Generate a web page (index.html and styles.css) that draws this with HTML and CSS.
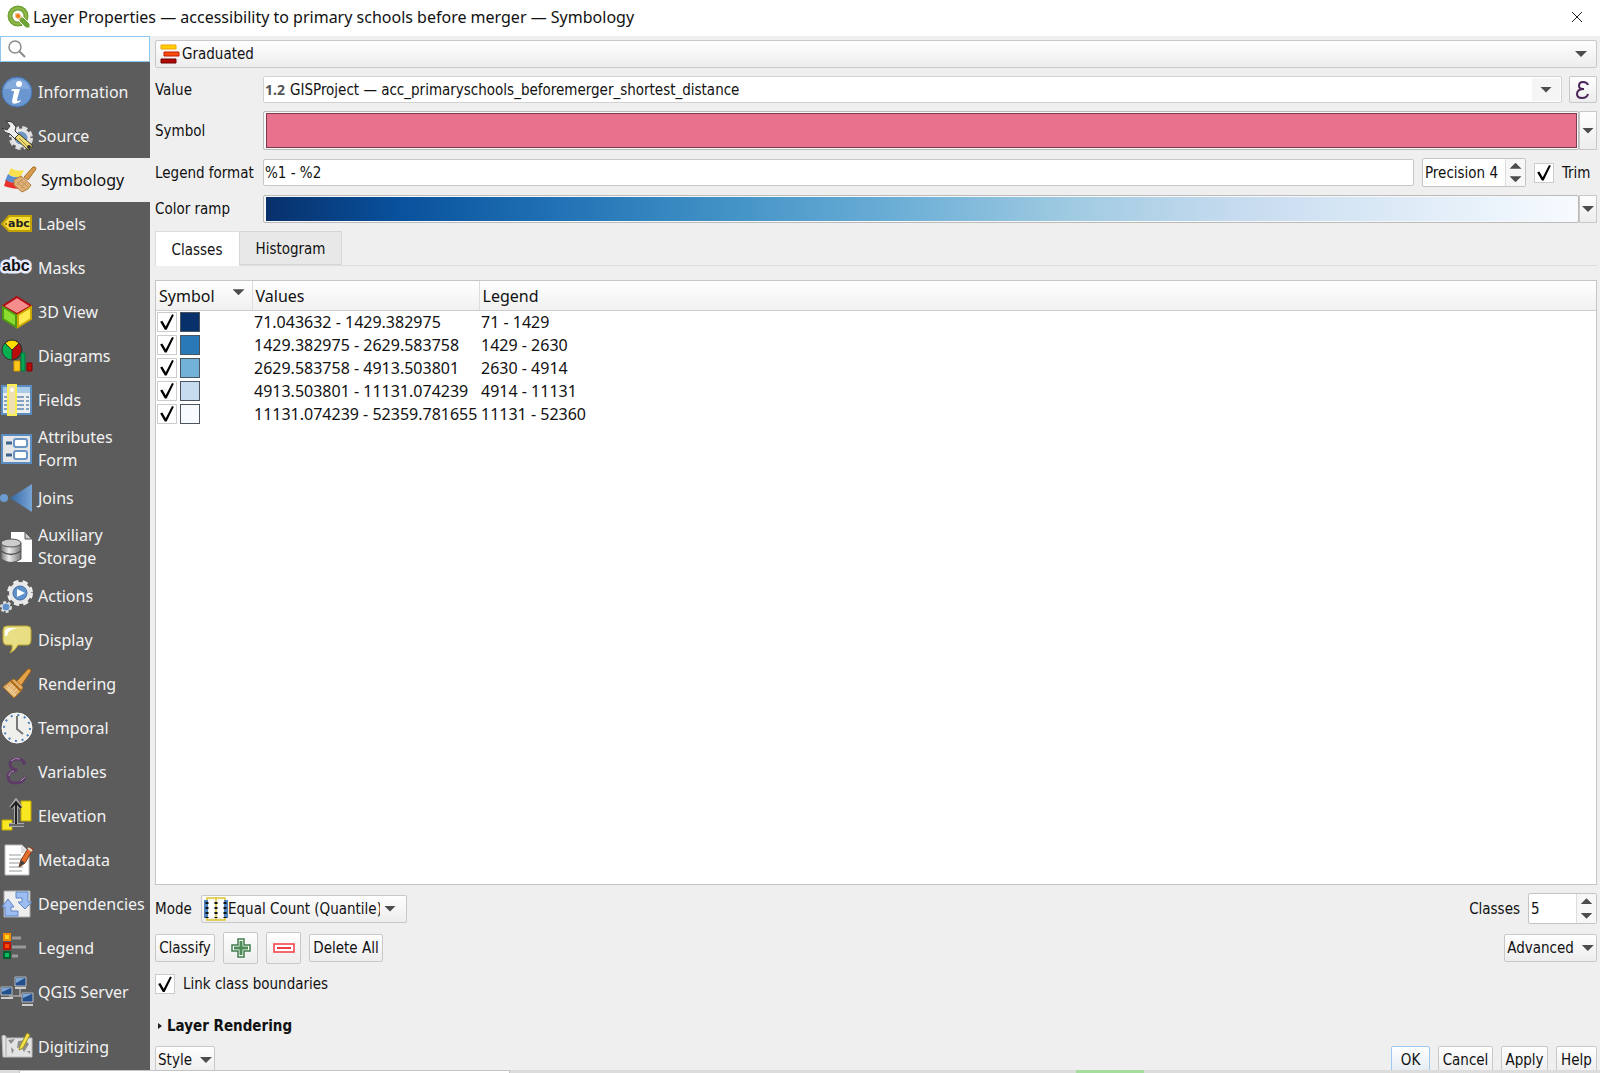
FILE: index.html
```html
<!DOCTYPE html>
<html lang="en">
<head>
    <meta charset="UTF-8">
    <meta name="viewport" content="width=device-width, initial-scale=1.0">
    <title>Layer Properties — Symbology</title>
    <link rel="stylesheet" href="styles.css">
</head>
<body>
    <header class="titlebar">
        <svg class="logo" viewBox="0 0 24 24">
            <circle cx="11" cy="11" r="8" fill="#fff" stroke="#6fa336" stroke-width="5"/>
            <circle cx="11" cy="11" r="8" fill="none" stroke="#93b84a" stroke-width="2"/>
            <path d="M12 12h4l7 7v4h-4l-7-7z" fill="#6fa336" stroke="#fff"/>
            <path d="M8 8l4 0 3 4-3 3-4-3z" fill="#f6c08a"/>
            <circle cx="11" cy="11" r="2" fill="#ee7913"/>
        </svg>
        <h1>Layer Properties — accessibility to primary schools before merger — Symbology</h1>
        <button class="close" aria-label="Close">
            <svg viewBox="0 0 10 10"><path d="M0 0L10 10M10 0L0 10" stroke="#222" fill="none"/></svg>
        </button>
    </header>

    <div class="window">
        <aside class="sidebar">
            <div class="search">
                <svg viewBox="0 0 18 18"><circle cx="7" cy="7" r="6" fill="none" stroke="#8b8b8b" stroke-width="1.5"/><path d="M11 11l6 6" stroke="#8b8b8b" stroke-width="2"/></svg>
                <input type="text" aria-label="Search">
            </div>
            <nav>
                <a href="#">
                    <svg viewBox="0 0 32 32"><circle cx="16" cy="16" r="15" fill="#6a97cf" stroke="#4573b3"/><path d="M3 13A13.500 13.500 0 0 1 29 13Q16 12 3 13z" fill="#84abdb"/><circle cx="18" cy="8" r="3" fill="#fff"/><path d="M11 13h8l-3 11q0 2 4 0l-1 2q-8 4-8-1l2-9q0-2-3-1z" fill="#fff"/></svg>
                    Information
                </a>
                <a href="#">
                    <svg viewBox="0 0 32 32"><circle cx="20" cy="18" r="10" fill="none" stroke="#ddd" stroke-width="4" stroke-dasharray="5 3"/><circle cx="20" cy="18" r="8" fill="#6d97c4" stroke="#e6e6e6" stroke-width="3"/><path d="M5 1l6 1 4 5-1 4 5 5-4 4-6-6q-5 0-8-6l5 2 3-4z" fill="#eee" stroke="#333"/><path d="M14 18l4-4 13 11q1 4-4 5z" fill="#f0dc74" stroke="#3f3a22"/><path d="M18 18l9 9" stroke="#a38c2f"/><circle cx="28" cy="27" r="2" fill="#333"/></svg>
                    Source
                </a>
                <a href="#" class="active">
                    <svg viewBox="0 0 32 32"><path d="M7 4q5 4 13 2l-4 8-12-3z" fill="#fbe04d"/><path d="M4 10q5 4 12 3l-3 7-12-3z" fill="#5b8fd0"/><path d="M2 16q5 4 11 2l5 7Q8 25 0 22z" fill="#e9302d"/><path d="M20 13l9-10q3-1 3 2l-8 11z" fill="#d79a4e" stroke="#a9702b"/><path d="M10 16l7-4 10 9-3 4-6 3-8-7z" fill="#dfb178" stroke="#b07a38"/><path d="M13 18l8 7M16 16l8 7M13 21l5-6M17 24l5-6" stroke="#bf9154"/></svg>
                    Symbology
                </a>
                <a href="#">
                    <svg viewBox="0 0 32 32"><path d="M1 16L8 8h22v15H8z" fill="#f7dd3b" stroke="#c2a100" stroke-width="2"/><circle cx="5" cy="16" r="1" fill="#7a6500"/><text x="7" y="19" class="abc-small">abc</text></svg>
                    Labels
                </a>
                <a href="#">
                    <svg viewBox="0 0 32 32"><text x="1" y="19" class="abc-halo">abc</text></svg>
                    Masks
                </a>
                <a href="#">
                    <svg viewBox="0 0 32 32"><path d="M16 1l14 9-14 8L2 10z" fill="#f58d8d" stroke="#b00d14" stroke-width="2"/><path d="M2 11l13 8v12L2 23z" fill="#8ade2f" stroke="#4f9912" stroke-width="2"/><path d="M30 11l-13 8v12l13-8z" fill="#ffe94f" stroke="#c9a800" stroke-width="2"/></svg>
                    3D View
                </a>
                <a href="#">
                    <svg viewBox="0 0 32 32"><circle cx="11" cy="10" r="10" fill="#06b050" stroke="#333"/><path d="M11 10L4 3q7-6 14 0z" fill="#ffdc00" stroke="#333"/><path d="M11 10l7-7q6 8-2 15l-5 2z" fill="#bb0b0b" stroke="#333"/><path d="M13 21h6v10h-6z" fill="#ffc81a" stroke="#d89700"/><path d="M20 13h4v18h-4z" fill="#06a654" stroke="#03763a"/><path d="M26 23h5v8h-5z" fill="#b90909" stroke="#7d0404"/></svg>
                    Diagrams
                </a>
                <a href="#">
                    <svg viewBox="0 0 32 32"><path d="M1 2h29v28H1z" fill="#eee" stroke="#5b8cc2" stroke-width="2"/><path d="M2 3h27v6H2z" fill="#a9cbe8"/><path d="M3 13h25M3 17h25M3 21h25M3 25h25" stroke="#6088b4" stroke-width="1.500" stroke-dasharray="9 2"/><path d="M7 1h8v30H7z" fill="#eedfb3" stroke="#f6ee52" stroke-width="2"/><circle cx="11" cy="6" r="2" fill="#fff"/></svg>
                    Fields
                </a>
                <a href="#" class="two-line">
                    <svg viewBox="0 0 32 32"><path d="M1 2h29v28H1z" fill="#e5e6e8" stroke="#5b8cc2" stroke-width="2"/><rect x="13" y="6" width="13" height="8" rx="2" fill="#fff" stroke="#6a94c4" stroke-width="2"/><rect x="13" y="18" width="13" height="8" rx="2" fill="#fff" stroke="#6a94c4" stroke-width="2"/><path d="M5 10h6M5 22h6" stroke="#40638c" stroke-width="3"/></svg>
                    Attributes<br>Form
                </a>
                <a href="#">
                    <svg viewBox="0 0 32 32"><defs><linearGradient id="join"><stop offset="0" stop-color="#3468a3"/><stop offset="1" stop-color="#79a5d6"/></linearGradient></defs><circle cx="3" cy="16" r="4" fill="#6c9bd1"/><path d="M9 16L31 2v28z" fill="url(#join)"/></svg>
                    Joins
                </a>
                <a href="#" class="two-line">
                    <svg viewBox="0 0 32 32"><defs><linearGradient id="disk"><stop offset="0" stop-color="#777"/><stop offset=".4" stop-color="#eee"/><stop offset="1" stop-color="#777"/></linearGradient></defs><path d="M10 1h14l7 7v23H10z" fill="#fff"/><path d="M24 1v7h7z" fill="#ccc" stroke="#555"/><path d="M0 12v16q10 7 20 0V12z" fill="url(#disk)" stroke="#555"/><ellipse cx="10" cy="12" rx="10" ry="4" fill="#ccc" stroke="#555"/><path d="M0 20q10 7 20 0" fill="none" stroke="#555" stroke-width="1.500"/></svg>
                    Auxiliary<br>Storage
                </a>
                <a href="#">
                    <svg viewBox="0 0 32 32"><circle cx="19" cy="13" r="11" fill="none" stroke="#eee" stroke-width="4" stroke-dasharray="5 4"/><circle cx="19" cy="13" r="9" fill="#5f92cd" stroke="#e8e8e8" stroke-width="4"/><circle cx="19" cy="13" r="7" fill="none" stroke="#3e6ba1"/><path d="M16 9l8 4-8 4z" fill="#fff"/><circle cx="5" cy="27" r="5" fill="none" stroke="#ddd" stroke-width="2" stroke-dasharray="3 2"/><circle cx="5" cy="27" r="4" fill="#5f92cd" stroke="#ddd"/></svg>
                    Actions
                </a>
                <a href="#">
                    <svg viewBox="0 0 32 32"><path d="M6 2h20q4 0 4 4v10q0 5-4 5h-9q-2 5-8 8 3-4 2-8H6q-4 0-4-5V6q0-4 4-4z" fill="#e8df84" stroke="#bba631"/><path d="M4 12V8q0-4 5-4h8Q7 5 6 12z" fill="#fff"/></svg>
                    Display
                </a>
                <a href="#">
                    <svg viewBox="0 0 32 32"><path d="M15 14L27 1q3-1 3 2L20 18z" fill="#e2a349" stroke="#9a5c12"/><path d="M8 14l5-3 9 8-2 4-7 7-11-11z" fill="#dfad6c" stroke="#b4711e"/><path d="M10 13l10 10" stroke="#a96711" stroke-width="2"/><path d="M6 18l9 9M5 20l9 8M9 24l5-6M7 22l5-6M11 26l5-5" stroke="#f3d8a5"/></svg>
                    Rendering
                </a>
                <a href="#">
                    <svg viewBox="0 0 32 32"><circle cx="16" cy="16" r="15" fill="#efefec" stroke="#fff"/><circle cx="16" cy="16" r="13" fill="none" stroke="#4b7dba" stroke-width="2" stroke-dasharray="2 4.800"/><path d="M16 4v13l6 5" fill="none" stroke="#777" stroke-width="2"/></svg>
                    Temporal
                </a>
                <a href="#">
                    <svg viewBox="0 0 32 32"><path d="M23 7q-1-4-7-4-7 0-7 5t7 6q-9 1-9 7 0 6 8 6 7 0 9-6" fill="none" stroke="#5e3b68" stroke-width="3"/><circle cx="23" cy="7" r="2" fill="#5e3b68"/><path d="M10 5q4-4 9-2M8 20q0-4 5-5M20 25l4-4" fill="none" stroke="#ab8bb3"/></svg>
                    Variables
                </a>
                <a href="#">
                    <svg viewBox="0 0 32 32"><path d="M20 1h10v20H20z" fill="#f9e723" stroke="#c3a800"/><path d="M1 20h10v10H1z" fill="#f9e723" stroke="#c3a800"/><path d="M15 24V4M10 8l5-7 5 7M8 25h15" fill="none" stroke="#aaa" stroke-width="4"/><path d="M15 24V3M10 8l5-6 5 6" fill="none" stroke="#222" stroke-width="2"/><path d="M8 25h15" stroke="#222"/></svg>
                    Elevation
                </a>
                <a href="#">
                    <svg viewBox="0 0 32 32"><path d="M4 1h17l7 7v23H4z" fill="#fff" stroke="#bbb"/><path d="M20 1v8h8z" fill="#ddd"/><path d="M8 11h12M8 15h14M8 19h12M8 23h14M8 27h13" stroke="#999"/><path d="M18 23l2-7L28 3l4 2-8 14z" fill="#e46f2c" stroke="#8b3a12"/><path d="M18 23l2-7 4 3z" fill="#444"/><path d="M27 4l4 3" stroke="#ddd" stroke-width="2"/></svg>
                    Metadata
                </a>
                <a href="#">
                    <svg viewBox="0 0 32 32"><path d="M3 3h26v26H3z" fill="#eee" stroke="#aaa"/><path d="M15 4h12v10h4l-7 7-7-7h4v-4h-6z" fill="#9dbdf2" stroke="#5f86c4"/><path d="M17 28H4V19H1l6-8 6 8h-3v4h7z" fill="#9dbdf2" stroke="#5f86c4"/></svg>
                    Dependencies
                </a>
                <a href="#">
                    <svg viewBox="0 0 32 32"><path d="M3 2h6v6H3z" fill="#ffd21e" stroke="#f08a00" stroke-width="2"/><path d="M3 11h6v6H3z" fill="#fa4b0c" stroke="#c11500" stroke-width="2"/><path d="M3 20h6v6H3z" fill="#0cbd63" stroke="#04602e" stroke-width="2"/><path d="M11 6h9M11 15h14M11 24h6" stroke="#999" stroke-width="3"/></svg>
                    Legend
                </a>
                <a href="#">
                    <svg viewBox="0 0 32 32"><path d="M19 12v8M8 20h16" stroke="#ccc"/><g fill="#234f8d" stroke="#bbb"><path d="M14 1h11v9H14zM0 11h11v8H0zM21 17h11v9H21z"/></g><path d="M15 2h9L15 7zM1 12h9l-9 4zM22 18h9l-9 4z" fill="#7fa5d2"/><path d="M14 12h11M0 22h12M21 29h11" stroke="#ccc" stroke-width="2"/></svg>
                    QGIS Server
                </a>
                <a href="#" class="last">
                    <svg viewBox="0 0 32 32"><path d="M1 4q4-2 4 2h26v19H2z" fill="#e3e3e3" stroke="#bbb"/><path d="M5 6v18" stroke="#aaa"/><path d="M7 8l7-1-4 5zM10 15l3 3-2 4zM17 9l7-1 4 4-5 8-3-5-4 1zM26 19h3v3z" fill="#8d8d8d"/><path d="M18 18l1-4L26 1l3 2-7 13z" fill="#f2e04f" stroke="#9c8d1c"/></svg>
                    Digitizing
                </a>
            </nav>
        </aside>

        <main>
            <div class="combo raised">
                <svg class="graduated-icon" viewBox="0 0 20 20"><path d="M1 1h15v4H1z" fill="#ffd000" stroke="#f5a300"/><path d="M4 8h15v4H4z" fill="#fb4d0b" stroke="#c41c00"/><path d="M1 15h15v4H1z" fill="#b00b05" stroke="#6d0000"/></svg>
                <select aria-label="Renderer"><option>Graduated</option></select>
                <i class="arrow"></i>
            </div>

            <div class="row">
                <label class="name" for="value">Value</label>
                <div class="combo editable">
                    <b class="type">1.2</b>
                    <select id="value"><option>GISProject — acc_primaryschools_beforemerger_shortest_distance</option></select>
                    <span class="drop-zone"><i class="arrow"></i></span>
                </div>
                <button class="expression" aria-label="Expression">
                    <svg viewBox="0 0 14 18"><path d="M12 4q-1-3-5-3-4 0-4 4 0 3 5 3-7 0-7 5 0 4 5 4t6-4" fill="none" stroke="#4a2358" stroke-width="2"/></svg>
                </button>
            </div>

            <div class="row symbol-row">
                <label class="name" for="symbol">Symbol</label>
                <button id="symbol" class="swatch-button"><span class="fill"></span></button>
                <button class="side-arrow" aria-label="Symbol menu"><i class="arrow"></i></button>
            </div>

            <div class="row format-row">
                <label class="name" for="format">Legend format</label>
                <input id="format" class="text" type="text" value="%1 - %2">
                <div class="spin precision">
                    <input type="text" value="Precision 4" aria-label="Precision">
                    <div class="steps"><button aria-label="Up"><i class="arrow up"></i></button><button aria-label="Down"><i class="arrow"></i></button></div>
                </div>
                <label class="check trim"><input type="checkbox" checked>Trim</label>
            </div>

            <div class="row ramp-row">
                <label class="name" for="ramp">Color ramp</label>
                <button id="ramp" class="swatch-button"><span class="fill ramp"></span></button>
                <button class="side-arrow" aria-label="Ramp menu"><i class="arrow"></i></button>
            </div>

            <div class="tabs" role="tablist">
                <button class="tab selected" role="tab">Classes</button>
                <button class="tab" role="tab">Histogram</button>
            </div>

            <div class="table-frame">
                <table>
                    <thead>
                        <tr><th class="col-symbol"><div>Symbol<i class="arrow"></i></div></th><th class="col-values">Values</th><th>Legend</th></tr>
                    </thead>
                    <tbody>
                        <tr><td><div class="mark"><input type="checkbox" checked aria-label="Show class 1"><span class="color c1"></span></div></td><td>71.043632 - 1429.382975</td><td>71 - 1429</td></tr>
                        <tr><td><div class="mark"><input type="checkbox" checked aria-label="Show class 2"><span class="color c2"></span></div></td><td>1429.382975 - 2629.583758</td><td>1429 - 2630</td></tr>
                        <tr><td><div class="mark"><input type="checkbox" checked aria-label="Show class 3"><span class="color c3"></span></div></td><td>2629.583758 - 4913.503801</td><td>2630 - 4914</td></tr>
                        <tr><td><div class="mark"><input type="checkbox" checked aria-label="Show class 4"><span class="color c4"></span></div></td><td>4913.503801 - 11131.074239</td><td>4914 - 11131</td></tr>
                        <tr><td><div class="mark"><input type="checkbox" checked aria-label="Show class 5"><span class="color c5"></span></div></td><td>11131.074239 - 52359.781655</td><td>11131 - 52360</td></tr>
                    </tbody>
                </table>
            </div>

            <div class="row mode-row">
                <label class="mode-name" for="mode">Mode</label>
                <div class="combo raised mode">
                    <svg class="mode-icon" viewBox="0 0 24 24"><path d="M3 1h18v22H3zM12 1v22" fill="none" stroke="#d9c42c" stroke-width="1.500"/><path d="M5 4h5v16H5zM14 4h5v16h-5z" fill="#fff"/><path d="M2 3v18M22 3v18" stroke="#4f83bd" stroke-width="4"/><path d="M3 5v16M12 5v16M21 5v16" stroke="#111" stroke-width="3" stroke-dasharray="2 3"/></svg>
                    <select id="mode"><option>Equal Count (Quantile)</option></select>
                    <i class="arrow"></i>
                </div>
                <label class="push" for="classes">Classes</label>
                <div class="spin classes">
                    <input id="classes" type="text" value="5">
                    <div class="steps"><button aria-label="More"><i class="arrow up"></i></button><button aria-label="Fewer"><i class="arrow"></i></button></div>
                </div>
            </div>

            <div class="row button-row">
                <button class="btn classify">Classify</button>
                <button class="btn tool" aria-label="Add class"><svg viewBox="0 0 20 20"><path d="M7 1h6v6h6v6h-6v6H7v-6H1V7h6z" fill="#fff" stroke="#3f7d4b" stroke-width="1.500"/><path d="M10 3v14M3 10h14" stroke="#4c8b57" stroke-width="3"/></svg></button>
                <button class="btn tool" aria-label="Remove class"><svg viewBox="0 0 20 20"><path d="M0 6h20v8H0z" fill="#fff" stroke="#ee3c45" stroke-width="1.500"/><path d="M3 10h14" stroke="#ee3c45" stroke-width="2"/></svg></button>
                <button class="btn delete">Delete All</button>
                <button class="btn advanced push">Advanced<i class="arrow"></i></button>
            </div>

            <label class="check link"><input type="checkbox" checked>Link class boundaries</label>

            <h2>Layer Rendering</h2>

            <footer>
                <button class="btn style">Style<i class="arrow"></i></button>
                <button class="btn ok push">OK</button>
                <button class="btn cancel">Cancel</button>
                <button class="btn apply">Apply</button>
                <button class="btn help">Help</button>
            </footer>
        </main>
    </div>
    <div class="strip"><span class="page"></span><span class="green"></span></div>
</body>
</html>
```

FILE: styles.css
```css
* {
    box-sizing: border-box;
}
body {
    margin: 0;
    min-height: 100vh;
    display: flex;
    flex-direction: column;
    background: #efefef;
    color: #111;
    font: 16px/22px "Noto Sans", sans-serif;
}
button, input, select {
    font: inherit;
    color: inherit;
    margin: 0;
    padding: 0;
}
svg {
    display: block;
    flex: none;
    overflow: visible;
}

/* title bar */
.titlebar {
    height: 36px;
    display: flex;
    align-items: center;
    background: #fff;
    padding: 0 18px 2px 7px;
}
.logo {
    width: 24px;
    height: 24px;
}
h1 {
    margin: 0 auto 0 2px;
    font-size: 16px;
    font-weight: normal;
}
.close {
    border: 0;
    background: none;
}
.close svg {
    width: 10px;
    height: 10px;
}

.window {
    flex: 1;
    display: flex;
}

/* sidebar */
.sidebar {
    width: 150px;
    background: #5c5c5c;
    display: flex;
    flex-direction: column;
}
.search {
    height: 26px;
    display: flex;
    align-items: center;
    padding-left: 7px;
    background: #fff;
    border: 1px solid #8fc8ee;
    margin-bottom: 8px;
}
.search svg {
    width: 18px;
    height: 18px;
}
.search input {
    flex: 1;
    min-width: 0;
    border: 0;
    outline: 0;
    background: none;
}
nav a {
    height: 44px;
    display: flex;
    align-items: center;
    gap: 5px;
    padding-left: 1px;
    color: #f2f2f2;
    line-height: 23px;
    text-decoration: none;
    white-space: nowrap;
}
nav svg {
    width: 32px;
    height: 32px;
}
nav a.active {
    background: #efefef;
    color: #111;
    padding-left: 4px;
}
nav a.two-line {
    height: 54px;
}
nav a.last {
    height: 55px;
    padding-top: 12px;
}
.abc-small {
    font: bold 11px "DejaVu Sans", sans-serif;
    fill: #222;
}
.abc-halo {
    font: bold 16px "Liberation Sans", sans-serif;
    fill: #111;
    stroke: #e6ebff;
    stroke-width: 5px;
    stroke-linejoin: round;
    paint-order: stroke;
}

/* main panel */
main {
    flex: 1;
    min-width: 0;
    display: flex;
    flex-direction: column;
    gap: 8px;
    padding: 4px 3px 0 5px;
}
.row, .combo, .check, .tab, .btn, h2 {
    font-family: "DejaVu Sans Condensed", "DejaVu Sans", sans-serif;
    font-size: 15px;
}
.row {
    display: flex;
    align-items: center;
    height: 27px;
}
.name {
    width: 108px;
}
.arrow {
    width: 12px;
    height: 6px;
    flex: none;
    background: #4d4d4d;
    clip-path: polygon(0 0, 100% 0, 50% 100%);
}
.arrow.up {
    clip-path: polygon(50% 0, 100% 100%, 0 100%);
}
.combo {
    display: flex;
    align-items: center;
    height: 28px;
    border: 1px solid #c8c8c8;
    border-radius: 2px;
}
.combo.raised, .btn, .expression, .side-arrow {
    background: linear-gradient(#fefefe, #ededed);
}
.combo.raised {
    padding: 0 9px 0 4px;
}
.combo select {
    flex: 1;
    min-width: 0;
    appearance: none;
    border: 0;
    background: none;
}
.graduated-icon {
    width: 20px;
    height: 20px;
    margin-right: 2px;
}
.editable {
    flex: 1;
    height: 27px;
    background: #fff;
    border-color: #d2d2d2;
}
.type {
    width: 26px;
    padding-left: 1px;
    font-family: "Noto Sans", sans-serif;
    font-size: 14px;
    color: #555;
}
.drop-zone {
    width: 28px;
    height: 23px;
    display: flex;
    align-items: center;
    justify-content: center;
    background: #f5f5f5;
    margin-right: 1px;
}
.expression {
    width: 28px;
    height: 27px;
    display: flex;
    align-items: center;
    justify-content: center;
    margin-left: 7px;
    border: 1px solid #c8c8c8;
    border-radius: 2px;
}
.expression svg {
    width: 14px;
    height: 18px;
}
.symbol-row {
    height: 39px;
}
.ramp-row {
    height: 28px;
}
.swatch-button {
    flex: 1;
    height: 100%;
    display: flex;
    padding: 1px 1px 1px 2px;
    background: #f8f8f8;
    border: 1px solid #bbb;
    border-radius: 2px;
}
.fill {
    flex: 1;
    align-self: stretch;
    background: #e8718d;
    border: 1px solid #7d3c4c;
}
.fill.ramp {
    border: 0;
    background: linear-gradient(90deg, #08306b, #08519c 10%, #2171b5 22%, #4292c6 35%, #6baed6 48%, #9ecae1 61%, #c6dbef 74%, #deebf7 87%, #f7fbff);
}
.side-arrow {
    width: 18px;
    height: 100%;
    display: flex;
    align-items: center;
    justify-content: center;
    border: 1px solid #c8c8c8;
}
.format-row {
    height: 29px;
}
.text {
    flex: 1;
    min-width: 0;
    height: 27px;
    padding-left: 1px;
    border: 1px solid #c8c8c8;
    border-radius: 2px;
    background: #fff;
}
.spin {
    display: flex;
    height: 29px;
    border: 1px solid #c4c4c4;
    border-radius: 2px;
    background: #fff;
}
.spin input {
    flex: 1;
    min-width: 0;
    border: 0;
    padding-left: 2px;
    background: none;
}
.precision {
    width: 104px;
    margin: 0 8px;
}
.classes {
    width: 69px;
    height: 31px;
}
.steps {
    width: 20px;
    display: flex;
    flex-direction: column;
    border-left: 1px solid #ddd;
    background: #f7f7f7;
}
.steps button {
    flex: 1;
    display: flex;
    align-items: center;
    justify-content: center;
    border: 0;
    background: none;
}

/* check boxes */
input[type="checkbox"] {
    appearance: none;
    width: 20px;
    height: 20px;
    flex: none;
    border: 1px solid #ccc;
    background: #fff;
}
input[type="checkbox"]:checked::before {
    content: "";
    display: block;
    height: 18px;
    background: #000;
    clip-path: polygon(12% 50%, 24% 44%, 43% 76%, 78% 8%, 88% 12%, 48% 94%, 38% 94%);
}
.check {
    display: flex;
    align-items: center;
    gap: 8px;
}
.trim {
    width: 63px;
}
.link {
    height: 24px;
}

/* tabs */
.tabs {
    height: 35px;
    display: flex;
    border-bottom: 1px solid #ddd;
}
.tab {
    width: 103px;
    height: 34px;
    padding-top: 2px;
    border: 1px solid #d6d6d6;
    background: #e8e8e8;
}
.tab.selected {
    width: 84px;
    height: 35px;
    border-color: #ddd #fff #fff #ddd;
    background: #fff;
}

/* classes table */
.table-frame {
    flex: 1;
    margin-top: 6px;
    background: #fff;
    border: 1px solid #c6c6c6;
}
table {
    width: 100%;
    table-layout: fixed;
    border-collapse: collapse;
}
th {
    height: 29px;
    padding: 2px 3px 0;
    text-align: left;
    font-weight: normal;
    background: linear-gradient(#fff, #f0f0f0);
    border-bottom: 1px solid #ccc;
    border-right: 1px solid #ddd;
}
th:last-child {
    border-right: 0;
}
th .arrow {
    margin-bottom: 8px;
}
th div {
    display: flex;
    align-items: center;
    justify-content: space-between;
    padding-right: 4px;
}
.col-symbol {
    width: 96px;
}
.col-values {
    width: 227px;
}
td {
    height: 23px;
    padding: 0 2px;
    white-space: nowrap;
}
td:first-child {
    padding-left: 1px;
}
.mark {
    display: flex;
    gap: 3px;
}
.color {
    width: 20px;
    height: 20px;
    border: 1px solid #4a5560;
}
.c1 { background: #08306b; }
.c2 { background: #2979b9; }
.c3 { background: #73b2d8; }
.c4 { background: #c8dcf0; }
.c5 { background: #f7fbff; }

/* lower controls */
.mode-row {
    height: 31px;
}
.mode-name {
    width: 46px;
}
.combo.mode {
    width: 206px;
    padding-left: 2px;
}
.mode-icon {
    width: 24px;
    height: 24px;
}
.mode select {
    flex: none;
    width: 152px;
    margin-right: 4px;
    white-space: nowrap;
    overflow: hidden;
    text-overflow: clip;
}
.push {
    margin-left: auto;
}
.spin.classes {
    margin-left: 8px;
}
.button-row {
    height: 32px;
    gap: 8px;
}
.btn {
    height: 28px;
    display: flex;
    align-items: center;
    justify-content: center;
    gap: 8px;
    border: 1px solid #c8c8c8;
    border-radius: 2px;
    white-space: nowrap;
}
.classify {
    width: 60px;
}
.tool {
    width: 35px;
    height: 32px;
}
.tool svg {
    width: 20px;
    height: 20px;
}
.delete {
    width: 74px;
}
.advanced {
    width: 93px;
}
h2 {
    margin: 10px 0 0;
    display: flex;
    align-items: center;
    gap: 5px;
    padding-left: 3px;
    line-height: 24px;
}
h2::before {
    content: "";
    width: 4px;
    height: 6px;
    background: #222;
    clip-path: polygon(0 0, 100% 50%, 0 100%);
}
footer {
    height: 24px;
    display: flex;
    gap: 8px;
    overflow: hidden;
}
.style {
    width: 60px;
}
.ok {
    width: 39px;
    border-color: #9cc8f2;
    background: linear-gradient(#fff, #e3eaf1);
}
.cancel {
    width: 55px;
}
.apply {
    width: 47px;
}
.help {
    width: 41px;
}

/* edge of the window behind */
.strip {
    height: 3px;
    display: flex;
    background: #dcdcdc;
}
.page {
    width: 491px;
    margin-left: 19px;
    border: 1px solid #c4c4c4;
    border-bottom: 0;
    background: #fff;
}
.green {
    width: 68px;
    margin-left: auto;
    margin-right: 456px;
    background: #a6dd9f;
}
```
